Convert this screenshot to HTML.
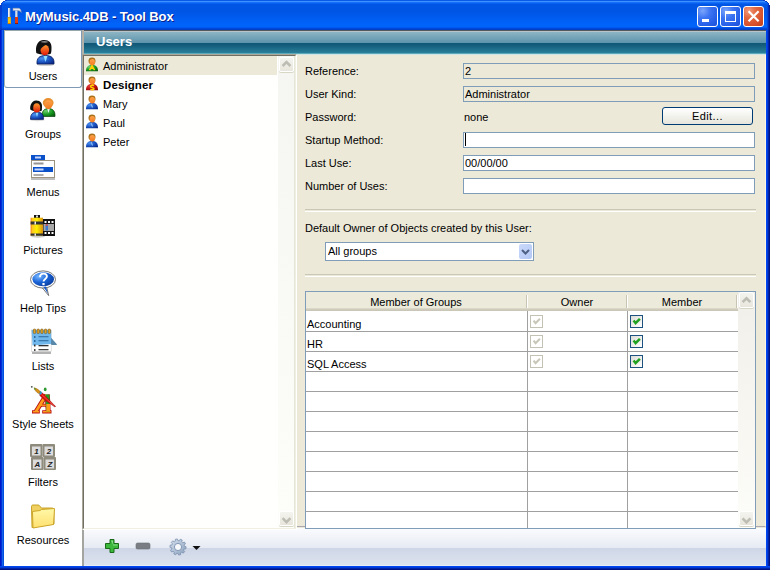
<!DOCTYPE html>
<html><head><meta charset="utf-8">
<style>
*{margin:0;padding:0;box-sizing:border-box}
html,body{width:770px;height:570px;overflow:hidden;background:#fff;font-family:"Liberation Sans",sans-serif;font-size:11px;color:#000}
div,span,svg{position:absolute}
svg{overflow:visible}
.nw{white-space:nowrap}
#win{left:0;top:0;width:770px;height:570px;background:#ece9d8;overflow:hidden}
#title{left:0;top:0;width:770px;height:30px;
 background:linear-gradient(180deg,#0a5ae8 0,#0a5ae8 1px,#3c90ff 1px,#3c90ff 2px,#1670f8 2px,#1670f8 3px,#0860f0 3px,#0860f0 4px,#0055e5 4px,#0055e5 12px,#0063fa 24px,#0063fa 27px,#0058f0 27px,#0058f0 28px,#0049d8 28px,#0049d8 29px,#0040c8 29px,#0040c8 30px)}
#ttext{left:25px;top:9px;letter-spacing:-0.1px;color:#fff;font-weight:bold;font-size:13px;text-shadow:1px 1px 0 #0a1e8c;white-space:nowrap}
.tb{top:6px;width:21px;height:21px;border:1px solid #fff;border-radius:3px;
 background:radial-gradient(circle at 25% 20%,#7aa4fb 0,#3e75f3 35%,#2760e8 70%,#1d4fd8 100%)}
.tb.cl{background:radial-gradient(circle at 25% 20%,#f29a7c 0,#e2673f 35%,#d6512c 70%,#c03f1b 100%)}
#lb{left:0;top:30px;width:4px;height:540px;background:linear-gradient(90deg,#0018c8 0,#0018c8 1px,#0030d8 1px,#0030d8 2px,#1860e8 2px,#1860e8 3px,#0050e0 3px)}
#rb{left:766px;top:30px;width:4px;height:540px;background:linear-gradient(90deg,#0046f0 0,#0046f0 1px,#003ad8 1px,#003ad8 2px,#0023a8 2px,#0023a8 3px,#001283 3px)}
#bb{left:0;top:566px;width:770px;height:4px;background:linear-gradient(180deg,#0046f0 0,#0046f0 1px,#003ad8 1px,#003ad8 2px,#0023a8 2px,#0023a8 3px,#001283 3px)}
#side{left:4px;top:30px;width:78px;height:536px;background:#fff}
#sel{left:4px;top:30px;width:78px;height:58px;border:1px solid #7f9ab4;border-top-color:#98a8a8;border-left-color:#a0b4b8;border-radius:0 0 3px 3px;background:#fff}
#sep{left:82px;top:30px;width:2px;height:536px;background:#b4b0a8}
.lbl{left:4px;width:78px;text-align:center;white-space:nowrap}
#hdr{left:84px;top:31px;width:682px;height:24px;
 background:linear-gradient(180deg,#b8c4c8 0,#b8c4c8 1px,#8db5c4 1px,#5c93ac 12px,#0f5675 12px,#15607e 15px,#2a809a 22px,#5aaabb 22px,#5aaabb 23px,#d0e4e4 23px)}
#hdrtext{left:12px;top:3px;color:#fff;font-weight:bold;font-size:13px}
#listbox{left:82px;top:54px;width:215px;height:476px;border:1px solid;border-color:#aca899 #fff #fff #aca899;background:#fffffd}
#listin{left:0;top:0;width:213px;height:474px;border:1px solid;border-color:#716f64 #f1efe2 #f1efe2 #716f64}
.urow{left:84px;width:193px;height:19px}
.ut{left:19px;top:4px;white-space:nowrap}
#right{left:297px;top:55px;width:469px;height:472px;background:#ece9d8;border-bottom:1px solid #a8a8b0;border-right:1px solid #fbf6e4}
.lb2{left:305px;white-space:nowrap}
.fld{left:463px;width:292px;height:16px;border:1px solid #7f9db9;background:#fff}
.fld.ro{background:#ece9d8}
.fv{left:1px;top:1px;white-space:nowrap}
.hsep{left:305px;width:451px;height:3px;border-top:1px solid #cac7b7;border-bottom:1px solid #fff}
#tbar{left:84px;top:528px;width:682px;height:38px;background:linear-gradient(180deg,#fbfcfe 0,#fafbfd 1px,#e6eaf3 20px,#cdd5e6 20px,#d2d9e8 24px,#dce2ee 37px,#e8ecf4 37px)}
.sbt{width:15px;height:15px;border:1px solid #fff;border-radius:2px;background:linear-gradient(180deg,#f4f4ef,#e8e6dc);box-shadow:0 1px 0 #d8d6c4}
.tline{height:1px;background:#a0a0a0}
.cb{width:13px;height:13px;border:1px solid #1c5180;background:linear-gradient(135deg,#dcdcd7,#fff)}
.cbd{width:13px;height:13px;border:1px solid #c4c2b4;background:#fff}
</style></head><body>
<div id="win">
 <div id="title">
  <svg style="left:0;top:0" width="30" height="30" viewBox="0 0 30 30">
   <rect x="8" y="8" width="2" height="9" fill="#e8ecf4"/><rect x="9.5" y="8" width="0.8" height="9" fill="#9aa4b8"/>
   <rect x="7.8" y="17" width="3" height="7" fill="#ffc800"/><rect x="7.8" y="17" width="3" height="1.2" fill="#e8a000"/><rect x="7.8" y="23" width="3" height="1" fill="#e07000"/>
   <path d="M13 8.3H18.5C20 8.3 21 9.5 21.2 12.4C20.4 11.2 19.6 10.8 18 10.6H13Z" fill="#e4e6ee" stroke="#9aa0b0" stroke-width="0.6"/>
   <rect x="15.3" y="10.6" width="2" height="6.6" fill="#e8ecf4"/><rect x="16.8" y="10.6" width="0.7" height="6.6" fill="#9aa4b8"/>
   <rect x="15" y="17" width="3" height="7" fill="#e03c10"/><rect x="15" y="23" width="3" height="1" fill="#901808"/>
  </svg>
  <div style="left:0;top:0;width:2px;height:30px;background:#0830c0;opacity:.6"></div>
  <div style="left:767px;top:5px;width:3px;height:25px;background:linear-gradient(90deg,#0048e0 0,#0048e0 1px,#0030b8 1px,#0030b8 2px,#001c98 2px)"></div>
  <div id="ttext">MyMusic.4DB - Tool Box</div>
  <div class="tb" style="left:697px"><div style="left:4px;top:12px;width:7px;height:3px;background:#fff"></div></div>
  <div class="tb" style="left:720px"><div style="left:4px;top:4px;width:11px;height:11px;border:1px solid #fff;border-top-width:3px"></div></div>
  <div class="tb cl" style="left:743px">
   <svg style="left:0;top:0" width="19" height="19" viewBox="0 0 19 19"><path d="M4.6 4.2L14.6 14.2M14.6 4.2L4.6 14.2" stroke="#fff" stroke-width="2.2"/></svg>
  </div>
 </div>
<div style="left:0;top:0;width:5px;height:1px;background:#fff"></div><div style="left:0;top:1px;width:3px;height:1px;background:#fff"></div><div style="left:0;top:2px;width:2px;height:1px;background:#fff"></div><div style="left:0;top:3px;width:1px;height:2px;background:#fff"></div>
<div style="left:5px;top:0;width:2px;height:1px;background:#1040d0"></div><div style="left:3px;top:1px;width:2px;height:1px;background:#1040d0"></div><div style="left:2px;top:2px;width:1px;height:1px;background:#1040d0"></div><div style="left:1px;top:3px;width:1px;height:2px;background:#1040d0"></div>
<div style="left:765px;top:0;width:5px;height:1px;background:#fff"></div><div style="left:767px;top:1px;width:3px;height:1px;background:#fff"></div><div style="left:768px;top:2px;width:2px;height:1px;background:#fff"></div><div style="left:769px;top:3px;width:1px;height:2px;background:#fff"></div>
<div style="left:763px;top:0;width:2px;height:1px;background:#0a3cc8"></div><div style="left:765px;top:1px;width:2px;height:1px;background:#0a3cc8"></div><div style="left:767px;top:2px;width:1px;height:1px;background:#0a3cc8"></div><div style="left:768px;top:3px;width:1px;height:2px;background:#0a3cc8"></div>
 <div id="lb"></div><div id="rb"></div><div id="bb"></div>

 <div id="side"></div>
 <div id="sel"></div>
 <div class="lbl" style="top:70px">Users</div>
 <div class="lbl" style="top:128px">Groups</div>
 <div class="lbl" style="top:186px">Menus</div>
 <div class="lbl" style="top:244px">Pictures</div>
 <div class="lbl" style="top:302px">Help Tips</div>
 <div class="lbl" style="top:360px">Lists</div>
 <div class="lbl" style="top:418px">Style Sheets</div>
 <div class="lbl" style="top:476px">Filters</div>
 <div class="lbl" style="top:534px">Resources</div>
 <div id="sep"></div>

 <div id="tbar"></div>
 <div style="left:82px;top:530px;width:2px;height:36px;background:#a4a4a0"></div>
 <div style="left:84px;top:30px;width:682px;height:1px;background:#555a5e"></div>
 <div id="hdr"><div id="hdrtext">Users</div></div>

 <div id="listbox"><div id="listin"></div></div>
 <div class="urow" style="top:56px;background:#ece9d8"><div class="ut">Administrator</div></div>
 <div class="urow" style="top:75px"><div class="ut" style="font-weight:bold;font-size:11.5px;letter-spacing:0.1px;top:3.5px">Designer</div></div>
 <div class="urow" style="top:94px"><div class="ut">Mary</div></div>
 <div class="urow" style="top:113px"><div class="ut">Paul</div></div>
 <div class="urow" style="top:132px"><div class="ut">Peter</div></div>
 <div style="left:278px;top:56px;width:17px;height:472px;background:linear-gradient(180deg,#f5f5f1,#fdfdfa);border-right:1px solid #e4e6d8"></div>
 <div class="sbt" style="left:279px;top:57px"></div>
 <div class="sbt" style="left:279px;top:511px"></div>

 <div id="right"></div>
 <div class="lb2" style="top:65px">Reference:</div>
 <div class="fld ro" style="top:63px"><div class="fv">2</div></div>
 <div class="lb2" style="top:88px">User Kind:</div>
 <div class="fld ro" style="top:86px"><div class="fv">Administrator</div></div>
 <div class="lb2" style="top:111px">Password:</div>
 <div class="nw" style="left:464px;top:111px">none</div>
 <div style="left:662px;top:107px;width:91px;height:18px;border:1px solid #003c74;border-radius:3px;background:linear-gradient(180deg,#fff 0,#f0f0ea 60%,#e6e4dc 100%)"><div class="nw" style="left:29px;top:2px;letter-spacing:0.4px">Edit...</div></div>
 <div class="lb2" style="top:134px">Startup Method:</div>
 <div class="fld" style="top:132px"><div style="left:1px;top:0;width:1px;height:13px;background:#000"></div></div>
 <div class="lb2" style="top:157px">Last Use:</div>
 <div class="fld" style="top:155px"><div class="fv">00/00/00</div></div>
 <div class="lb2" style="top:180px">Number of Uses:</div>
 <div class="fld" style="top:178px"></div>
 <div class="hsep" style="top:209px"></div>
 <div class="lb2" style="top:222px">Default Owner of Objects created by this User:</div>
 <div style="left:325px;top:242px;width:209px;height:19px;border:1px solid #7f9db9;background:#fff">
  <div class="nw" style="left:2px;top:2px">All groups</div>
  <div style="left:193px;top:1px;width:13px;height:15px;border-radius:2px;background:linear-gradient(135deg,#cad9fa,#b3c8f5)"></div>
 </div>
 <div class="hsep" style="top:274px"></div>

 <div style="left:305px;top:291px;width:451px;height:238px;border:1px solid #7f9db9;background:#fff"></div>
 <div style="left:306px;top:292px;width:432px;height:19px;background:linear-gradient(180deg,#ebeadb 0,#ebeadb 16px,#e2decd 16px,#d6d2c2 17px,#cbc7b8 18px)"></div>
<div class="nw" style="left:306px;top:296px;width:220px;text-align:center">Member of Groups</div>
<div class="nw" style="left:528px;top:296px;width:98px;text-align:center">Owner</div>
<div class="nw" style="left:628px;top:296px;width:108px;text-align:center">Member</div>
<div style="left:526px;top:295px;width:1px;height:13px;background:#c7c4b4"></div><div style="left:527px;top:295px;width:1px;height:13px;background:#fff"></div>
<div style="left:626px;top:295px;width:1px;height:13px;background:#c7c4b4"></div><div style="left:627px;top:295px;width:1px;height:13px;background:#fff"></div>
<div style="left:736px;top:295px;width:1px;height:13px;background:#c7c4b4"></div><div style="left:737px;top:295px;width:1px;height:13px;background:#fff"></div>
<div class="tline" style="left:306px;top:331px;width:432px"></div>
<div class="tline" style="left:306px;top:351px;width:432px"></div>
<div class="tline" style="left:306px;top:371px;width:432px"></div>
<div class="tline" style="left:306px;top:391px;width:432px"></div>
<div class="tline" style="left:306px;top:411px;width:432px"></div>
<div class="tline" style="left:306px;top:431px;width:432px"></div>
<div class="tline" style="left:306px;top:451px;width:432px"></div>
<div class="tline" style="left:306px;top:471px;width:432px"></div>
<div class="tline" style="left:306px;top:491px;width:432px"></div>
<div class="tline" style="left:306px;top:511px;width:432px"></div>
<div style="left:527px;top:311px;width:1px;height:217px;background:#a0a0a0"></div>
<div style="left:627px;top:311px;width:1px;height:217px;background:#a0a0a0"></div>
<div class="nw" style="left:307px;top:318px">Accounting</div>
<div class="cbd" style="left:530px;top:315px"><svg style="left:2px;top:2px" width="9" height="9" viewBox="0 0 9 9"><path d="M0.6 2.6L2.6 5.2L6.9 0.8" fill="none" stroke="#c8c6b8" stroke-width="2"/></svg></div>
<div class="cb" style="left:630px;top:315px"><svg style="left:2px;top:2px" width="9" height="9" viewBox="0 0 9 9"><path d="M0.6 2.6L2.6 5.2L6.9 0.8" fill="none" stroke="#21a121" stroke-width="2.5"/></svg></div>
<div class="nw" style="left:307px;top:338px">HR</div>
<div class="cbd" style="left:530px;top:335px"><svg style="left:2px;top:2px" width="9" height="9" viewBox="0 0 9 9"><path d="M0.6 2.6L2.6 5.2L6.9 0.8" fill="none" stroke="#c8c6b8" stroke-width="2"/></svg></div>
<div class="cb" style="left:630px;top:335px"><svg style="left:2px;top:2px" width="9" height="9" viewBox="0 0 9 9"><path d="M0.6 2.6L2.6 5.2L6.9 0.8" fill="none" stroke="#21a121" stroke-width="2.5"/></svg></div>
<div class="nw" style="left:307px;top:358px">SQL Access</div>
<div class="cbd" style="left:530px;top:355px"><svg style="left:2px;top:2px" width="9" height="9" viewBox="0 0 9 9"><path d="M0.6 2.6L2.6 5.2L6.9 0.8" fill="none" stroke="#c8c6b8" stroke-width="2"/></svg></div>
<div class="cb" style="left:630px;top:355px"><svg style="left:2px;top:2px" width="9" height="9" viewBox="0 0 9 9"><path d="M0.6 2.6L2.6 5.2L6.9 0.8" fill="none" stroke="#21a121" stroke-width="2.5"/></svg></div>
<div style="left:738px;top:292px;width:17px;height:236px;background:linear-gradient(180deg,#f1efe9,#fdfdf9)"></div>
<div class="sbt" style="left:739px;top:292px;height:16px"></div>
<div class="sbt" style="left:739px;top:511px"></div>

<svg style="left:0;top:0;pointer-events:none" width="770" height="570" viewBox="0 0 770 570">
 <defs>
  <linearGradient id="gface" x1="0" y1="0" x2="0" y2="1"><stop offset="0" stop-color="#ff9a30"/><stop offset="1" stop-color="#e01808"/></linearGradient>
  <linearGradient id="gface2" x1="0" y1="0" x2="0" y2="1"><stop offset="0" stop-color="#ffa048"/><stop offset="1" stop-color="#f07a20"/></linearGradient>
  <radialGradient id="gblue" cx="0.3" cy="0.35" r="0.8"><stop offset="0" stop-color="#4a90f0"/><stop offset="0.55" stop-color="#1a52c0"/><stop offset="1" stop-color="#0a2a88"/></radialGradient>
  <radialGradient id="ggreen" cx="0.3" cy="0.3" r="0.8"><stop offset="0" stop-color="#70d070"/><stop offset="0.6" stop-color="#169a20"/><stop offset="1" stop-color="#0a6410"/></radialGradient>
  <radialGradient id="gred" cx="0.3" cy="0.3" r="0.8"><stop offset="0" stop-color="#e04040"/><stop offset="0.6" stop-color="#c01010"/><stop offset="1" stop-color="#900808"/></radialGradient>
  <radialGradient id="gbub" cx="0.3" cy="0.3" r="0.8"><stop offset="0" stop-color="#78b8ff"/><stop offset="0.5" stop-color="#1a64d8"/><stop offset="1" stop-color="#0a3a9a"/></radialGradient>
  <linearGradient id="gcan" x1="0" y1="0" x2="1" y2="0"><stop offset="0" stop-color="#f08010"/><stop offset="0.15" stop-color="#ffc820"/><stop offset="0.5" stop-color="#fff000"/><stop offset="1" stop-color="#d89010"/></linearGradient>
  <linearGradient id="gfold" x1="0" y1="0" x2="0" y2="1"><stop offset="0" stop-color="#fff8a8"/><stop offset="1" stop-color="#ffe070"/></linearGradient>
  <symbol id="uman" viewBox="0 0 16 19">
   <path d="M1.8 15.5C1.8 10.5 4 9 8 9C12 9 14 10.5 14 15.5Z" fill="currentColor"/>
   <ellipse cx="8" cy="5.2" rx="3.6" ry="3.6" fill="#b88020"/>
   <ellipse cx="8.2" cy="6.3" rx="2.8" ry="3.3" fill="url(#gface2)"/>
  </symbol>
 </defs>
 <!-- list user icons -->
 <g transform="translate(84,56)">
  <path d="M2 15.3C2 10.6 4.2 9 8 9C11.8 9 14 10.6 14 15.3Z" fill="url(#ggreen)"/>
  <ellipse cx="8" cy="5" rx="3.5" ry="3.4" fill="#a87018"/>
  <ellipse cx="8.3" cy="6.3" rx="2.7" ry="3.2" fill="url(#gface2)"/>
  <path d="M5.6 14.2L8 9.8L10.6 14.2M6.6 12.2H9.6" fill="none" stroke="#ffd000" stroke-width="1.5"/>
 </g>
 <g transform="translate(84,75)">
  <path d="M2 15.3C2 10.6 4.2 9 8 9C11.8 9 14 10.6 14 15.3Z" fill="url(#gred)"/>
  <ellipse cx="8" cy="5" rx="3.5" ry="3.4" fill="#a87018"/>
  <ellipse cx="8.3" cy="6.3" rx="2.7" ry="3.2" fill="url(#gface2)"/>
  <path d="M10 10.6C9 9.8 6.4 10 6.6 11.6C6.8 13 10 12.4 10 13.8C10 15 7.6 15 6.4 14.4" fill="none" stroke="#ffd000" stroke-width="1.5"/>
 </g>
 <g transform="translate(84,94)">
  <path d="M2 15.3C2 10.6 4.2 9 8 9C11.8 9 14 10.6 14 15.3Z" fill="url(#gblue)"/>
  <ellipse cx="8" cy="5" rx="3.5" ry="3.4" fill="#a87018"/>
  <ellipse cx="8.3" cy="6.3" rx="2.7" ry="3.2" fill="url(#gface2)"/>
  <path d="M7 10L8.6 13.4" stroke="#8ab8f0" stroke-width="1.2"/>
 </g>
 <g transform="translate(84,113)">
  <path d="M2 15.3C2 10.6 4.2 9 8 9C11.8 9 14 10.6 14 15.3Z" fill="url(#gblue)"/>
  <ellipse cx="8" cy="5" rx="3.5" ry="3.4" fill="#a87018"/>
  <ellipse cx="8.3" cy="6.3" rx="2.7" ry="3.2" fill="url(#gface2)"/>
  <path d="M7 10L8.6 13.4" stroke="#8ab8f0" stroke-width="1.2"/>
 </g>
 <g transform="translate(84,132)">
  <path d="M2 15.3C2 10.6 4.2 9 8 9C11.8 9 14 10.6 14 15.3Z" fill="url(#gblue)"/>
  <ellipse cx="8" cy="5" rx="3.5" ry="3.4" fill="#a87018"/>
  <ellipse cx="8.3" cy="6.3" rx="2.7" ry="3.2" fill="url(#gface2)"/>
  <path d="M7 10L8.6 13.4" stroke="#8ab8f0" stroke-width="1.2"/>
 </g>

 <!-- Users sidebar icon -->
 <ellipse cx="45.5" cy="64.5" rx="9" ry="1.6" fill="#000" opacity="0.18"/>
 <path d="M37 64C36.5 58 39.5 55.5 45.5 55.5C51.5 55.5 54.5 58 54 64Z" fill="url(#gblue)" stroke="#0a1e60" stroke-width="0.8"/>
 <path d="M43.5 56L45.5 62L47.5 56Z" fill="#8ee0ff"/>
 <path d="M36.3 53C35.3 47 36.8 41 43 40C48.5 39.3 51.8 42.5 51.5 47.5C51.4 50.5 51.6 52.5 50.5 54C46 55 40 54.8 36.3 53Z" fill="#111"/>
 <path d="M40.5 42C42.5 40.8 46 40.8 48.5 42C46.5 43 43 43 40.5 42Z" fill="#888"/>
 <ellipse cx="44.8" cy="50" rx="4.3" ry="5.3" fill="url(#gface)"/>
 <path d="M39.8 47C41.5 44.6 44.5 43.6 47.6 43.4C48.8 43.5 49.3 44.2 49.2 45.2C48.6 44.4 47.2 44.3 46.2 44.8C44.2 45.8 42.2 47 40.4 49.5Z" fill="#111"/>

 <!-- Groups sidebar icon -->
 <path d="M42 116.5C41.8 111 44 108.6 48.5 108.6C53 108.6 55.3 111 55 116.5Z" fill="url(#ggreen)" stroke="#0a4010" stroke-width="0.7"/>
 <path d="M47.3 109L48.5 113L49.7 109Z" fill="#e8f8ff"/>
 <ellipse cx="48.2" cy="102.8" rx="5.4" ry="4.8" fill="#e89030"/>
 <ellipse cx="48.4" cy="104.6" rx="4" ry="4.6" fill="url(#gface2)"/>
 <ellipse cx="37.5" cy="120" rx="7" ry="1.2" fill="#000" opacity="0.15"/>
 <path d="M30.5 119.4C30.2 114.5 32.5 112 37 112C41.5 112 43.9 114.5 43.6 119.4Z" fill="url(#gblue)" stroke="#0a1e60" stroke-width="0.7"/>
 <path d="M35.6 112.4L37 117L38.4 112.4Z" fill="#8ee0ff"/>
 <path d="M30.3 109.5C29.8 105.5 31.5 100.6 36 100.4C40.5 100.2 42.4 103.4 42 107C41.9 109.3 42 110.4 41.3 111C39 111.8 33.5 111.8 30.3 109.5Z" fill="#111"/>
 <ellipse cx="36.7" cy="107.9" rx="3.5" ry="4.6" fill="url(#gface)"/>

 <!-- Menus -->
 <rect x="31" y="177" width="24" height="3" fill="#000" opacity="0.25"/>
 <rect x="31" y="155" width="14" height="5" fill="#0a50c8"/>
 <rect x="35" y="156.5" width="6" height="2" fill="#c8d8ff"/>
 <rect x="31.5" y="160.5" width="23" height="17" fill="#fff" stroke="#9d9580" stroke-width="1"/>
 <rect x="33.5" y="162.5" width="10" height="2" fill="#666" opacity="0.7"/>
 <rect x="33" y="167" width="20" height="5" fill="#0a50c8"/>
 <rect x="34.5" y="168.5" width="9" height="2" fill="#c8d8ff"/>
 <rect x="33.5" y="174" width="10" height="2" fill="#777" opacity="0.6"/>

 <!-- Pictures -->
 <ellipse cx="38" cy="236.5" rx="7" ry="1.2" fill="#000" opacity="0.2"/>
 <rect x="43" y="219" width="12" height="17" fill="#111"/>
 <rect x="44.5" y="221" width="2" height="2" fill="#fff"/><rect x="48" y="221" width="2" height="2" fill="#fff"/><rect x="51.5" y="221" width="2" height="2" fill="#fff"/>
 <rect x="44.5" y="232" width="2" height="2" fill="#fff"/><rect x="48" y="232" width="2" height="2" fill="#fff"/><rect x="51.5" y="232" width="2" height="2" fill="#fff"/>
 <rect x="43.5" y="224" width="10.5" height="7" fill="#a8a8a8"/>
 <rect x="45.5" y="224.5" width="2.5" height="6" fill="#3a7ad0"/><rect x="45.8" y="224" width="1.8" height="2" fill="#d05050"/>
 <rect x="34" y="215" width="6" height="3" fill="#111"/><rect x="36" y="215.5" width="2" height="2" fill="#ddd"/>
 <rect x="30.6" y="217.7" width="12.4" height="18" fill="url(#gcan)"/>
 <rect x="30.6" y="221.5" width="12.4" height="3" fill="#333"/>
 <rect x="34.5" y="221.5" width="1.5" height="3" fill="#eee"/>
 <rect x="30.6" y="233.5" width="12.4" height="2.2" fill="#333"/>
 <rect x="34.5" y="233.5" width="1.5" height="2.2" fill="#eee"/>

 <!-- Help Tips -->
 <path d="M42 287.5L48.7 295.6L46.5 286.5Z" fill="#fff" stroke="#555" stroke-width="0.8"/>
 <ellipse cx="43" cy="279.5" rx="12.5" ry="8.6" fill="#fff" stroke="#666" stroke-width="0.9"/>
 <path d="M43.5 287L47.8 293.5L46 286.5Z" fill="#1a5ac8"/>
 <ellipse cx="43.2" cy="279.3" rx="10.8" ry="7" fill="url(#gbub)"/>
 <path d="M40 277.2C40 272.6 47 272.6 46.9 276.6C46.8 279 43.5 279 43.5 281.6" fill="none" stroke="#fff" stroke-width="1.9"/>
 <rect x="42.4" y="283" width="2.2" height="2.2" fill="#fff"/>

 <!-- Lists -->
 <rect x="32" y="351" width="19" height="3" fill="#000" opacity="0.3"/>
 <rect x="31.6" y="330" width="19.6" height="21.5" fill="#fff" stroke="#ccc" stroke-width="0.6"/>
 <path d="M32 331H51V344C51.5 345.5 54 345 57 344.5L51 338Z" fill="#4a8ab8"/>
 <path d="M31.6 330H51.2V344L32.5 345.5Z" fill="#70b8ec"/>
 <path d="M51.2 338L57 344.8C54 345.2 51.5 345 51.2 344Z" fill="#5a88a8"/>
 <rect x="38.5" y="336" width="10" height="1.3" fill="#3a7ab0"/>
 <rect x="38.5" y="340" width="10" height="1.3" fill="#3a7ab0"/>
 <rect x="38.5" y="345" width="10" height="1.3" fill="#333"/>
 <rect x="38.5" y="349" width="10" height="1.3" fill="#444"/>
 <rect x="34" y="336" width="1.5" height="2" fill="#2a6aa0"/><rect x="34" y="340" width="1.5" height="2" fill="#2a6aa0"/>
 <rect x="34" y="344.5" width="1.5" height="2" fill="#333"/><rect x="34" y="349" width="1.5" height="2" fill="#444"/>
 <g fill="#e0a020" stroke="#6a4a10" stroke-width="0.5">
  <rect x="33.3" y="329" width="2.4" height="4.6" rx="1"/><rect x="37" y="329" width="2.4" height="4.6" rx="1"/><rect x="40.7" y="329" width="2.4" height="4.6" rx="1"/><rect x="44.4" y="329" width="2.4" height="4.6" rx="1"/><rect x="48.1" y="329" width="2.4" height="4.6" rx="1"/>
 </g>

 <!-- Style Sheets -->
 <g stroke="#b81010" stroke-linejoin="round" stroke-linecap="butt" fill="none">
  <path d="M46.2 395L36 411.5" stroke-width="4.6"/>
  <path d="M47.3 394.5L48.2 411.5" stroke-width="5"/>
  <path d="M32 411.8H39.8M42.2 411.8H51.5" stroke-width="3.2"/>
  <path d="M40 405.2H46" stroke-width="3"/>
 </g>
 <g stroke="#ff9c1c" stroke-linejoin="round" fill="none">
  <path d="M46.2 395L36 411.5" stroke-width="2.8"/>
  <path d="M40.6 405.2H45.8" stroke-width="1.4"/>
  <path d="M32.8 411.8H39M43 411.8H50.7" stroke-width="1.6"/>
 </g>
 <path d="M45.4 394.6L49.4 394.6L50 411.2H46.3Z" fill="#23a023"/>
 <path d="M46.3 404L50 404L50 411.2H46.3Z" fill="#ff9c1c"/>
 <path d="M40.5 392.8C41.5 392.2 42.4 392.8 43 393.6L55.6 406.4L55 407C50 403.5 44 400 40.2 396C39.5 395 39.6 393.5 40.5 392.8Z" fill="#e01010" stroke="#8a0808" stroke-width="0.5"/>
 <path d="M41.5 394.5L54 405.5" stroke="#ff8060" stroke-width="0.7" opacity="0.8"/>
 <path d="M38.6 392.2L40.8 390.8L42.2 393.2L40 395Z" fill="#2aa8e8"/>
 <path d="M34 387.8C35.5 387.8 38.5 389.5 40.2 391.5C40.5 392.5 39.5 393.6 38.6 393.5C36.5 392.5 34.5 390 34 387.8Z" fill="#d89018" stroke="#805008" stroke-width="0.4"/>
 <path d="M33.8 387.6L36 389L35 390.2Z" fill="#40a030"/>
 <circle cx="31.8" cy="386.8" r="0.9" fill="#405040"/>
 <ellipse cx="45.2" cy="389.4" rx="1.4" ry="1.8" fill="#2a9a30"/>

 <!-- Filters -->
 <g>
  <rect x="30" y="444" width="12.5" height="13" rx="1" fill="#8e8a7c"/>
  <rect x="42.5" y="444" width="12.5" height="13" rx="1" fill="#8e8a7c"/>
  <rect x="31" y="457" width="12.5" height="13" rx="1" fill="#8e8a7c"/>
  <rect x="43.5" y="457" width="12.5" height="13" rx="1" fill="#8e8a7c"/>
  <rect x="32" y="446.5" width="8.5" height="9" fill="#dcdcdc"/>
  <rect x="44.5" y="446.5" width="8.5" height="9" fill="#dcdcdc"/>
  <rect x="33" y="459.5" width="8.5" height="9" fill="#dcdcdc"/>
  <rect x="45.5" y="459.5" width="8.5" height="9" fill="#dcdcdc"/>
  <g font-family="Liberation Sans" font-weight="bold" font-style="italic" font-size="8" fill="#222" text-anchor="middle">
   <text x="36.4" y="454">1</text><text x="48.9" y="454">2</text><text x="37.4" y="467">A</text><text x="49.9" y="467">Z</text>
  </g>
 </g>

 <!-- Resources folder -->
 <path d="M31.5 506.5C31.5 505.5 32 505 33 505H38C39 505 39.5 505.5 40.5 507L41.5 508H51.5C53 508 54 508.5 54 510V524L32 527.5Z" fill="#f0d060" stroke="#c09818" stroke-width="0.9"/>
 <path d="M32.5 511.5L40 510.5L41.5 509.5L54.5 508.5L53.5 524.5L33 528Z" fill="url(#gfold)" stroke="#c8a020" stroke-width="0.9"/>

 <!-- title bar icon (done in title) -->

 <!-- toolbar icons -->
 <path d="M110 539.5H114V543.5H118.5V548.5H114V552.5H110V548.5H105.5V543.5H110Z" fill="#3cb83c" stroke="#1a6a1a" stroke-width="1"/>
 <path d="M111 540.5H113V544.5H117.5V545.5H113V544.5Z" fill="#9ee89e" opacity="0.8"/>
 <rect x="136" y="543" width="14" height="6" rx="1.5" fill="#7a7e84" stroke="#6a6e74" stroke-width="0.6"/>
 <g transform="translate(178,547)">
  <defs><linearGradient id="ggear" x1="0" y1="0" x2="1" y2="1"><stop offset="0" stop-color="#d8e2f0"/><stop offset="1" stop-color="#8aa0bc"/></linearGradient></defs>
  <path d="M6.36 -0.70 L8.10 -0.24 L7.89 1.85 L6.09 1.95 L5.56 3.17 L6.69 4.56 L5.30 6.13 L3.78 5.16 L2.63 5.83 L2.73 7.63 L0.68 8.07 L0.03 6.40 L-1.30 6.27 L-2.27 7.78 L-4.19 6.93 L-3.74 5.19 L-4.73 4.31 L-6.41 4.96 L-7.47 3.14 L-6.08 2.00 L-6.36 0.70 L-8.10 0.24 L-7.89 -1.85 L-6.09 -1.95 L-5.56 -3.17 L-6.69 -4.56 L-5.30 -6.13 L-3.78 -5.16 L-2.63 -5.83 L-2.73 -7.63 L-0.68 -8.07 L-0.03 -6.40 L1.30 -6.27 L2.27 -7.78 L4.19 -6.93 L3.74 -5.19 L4.73 -4.31 L6.41 -4.96 L7.47 -3.14 L6.08 -2.00Z" fill="url(#ggear)" stroke="#7a90ae" stroke-width="0.8" stroke-linejoin="round"/>
  <circle r="3.6" fill="#f6f8fb" stroke="#8299b6" stroke-width="1"/>
 </g>
 <path d="M192.5 546H200.5L196.5 550Z" fill="#111"/>

 <!-- scrollbar chevrons -->
 <path d="M282.6 66L286.5 62.1L290.4 66" fill="none" stroke="#bdbdb4" stroke-width="2.6"/>
 <path d="M282.6 518.2L286.5 522.1L290.4 518.2" fill="none" stroke="#bdbdb4" stroke-width="2.6"/>
 <path d="M742.6 302.2L746.5 298.3L750.4 302.2" fill="none" stroke="#bdbdb4" stroke-width="2.6"/>
 <path d="M742.6 518.4L746.5 522.3L750.4 518.4" fill="none" stroke="#bdbdb4" stroke-width="2.6"/>
 <!-- combo chevron -->
 <path d="M522 250L525.5 253.5L529 250" fill="none" stroke="#4d6185" stroke-width="2"/>
</svg>

</div>
</body></html>
